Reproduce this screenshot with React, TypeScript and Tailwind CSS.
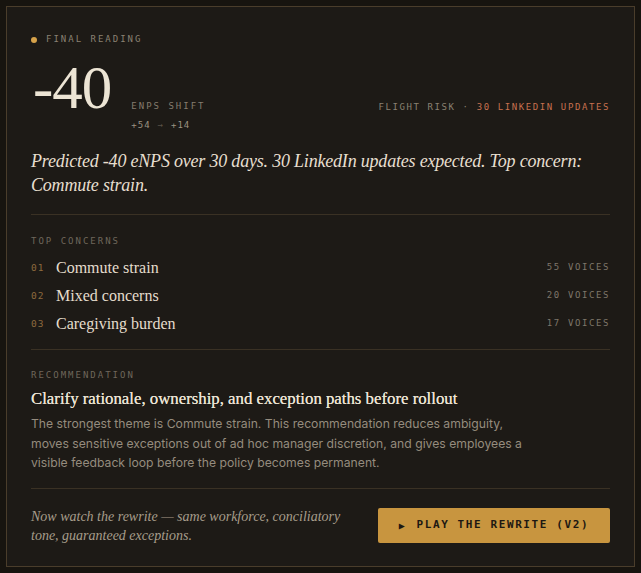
import React from "react";

const concerns = [
  { n: "01", label: "Commute strain", voices: 55 },
  { n: "02", label: "Mixed concerns", voices: 20 },
  { n: "03", label: "Caregiving burden", voices: 17 },
];

const serif = "font-['Liberation_Serif',serif]";
const mono = "font-['DejaVu_Sans_Mono',monospace]";
const sans = "font-['Inter',sans-serif]";

const App = () => {
  return (
    <div className="min-h-[573px] w-full bg-[#17140f] p-[6px]">
      <div className="flex h-[561px] flex-col border border-[#4a3d2b] bg-[#1d1a16] px-[24px] pt-[27px]">
        <div className={`flex h-[12px] items-center gap-[9px] ${mono} text-[9px] tracking-[2px] text-[#8a8172]`}>
          <span className="h-[6px] w-[6px] rounded-full bg-[#d6a24a]" />
          <span>FINAL READING</span>
        </div>

        <div className="mt-[12px] flex items-start">
          <div className={`${serif} h-[60px] text-[61px] leading-[60px] text-[#ece4d4] tracking-[-1px] pl-[2px]`}>-40</div>
          <div className={`ml-[20px] mt-[42px] flex flex-col gap-[7px] ${mono} text-[9px] leading-[12px] tracking-[2px] text-[#857c6e]`}>
            <span>ENPS SHIFT</span>
            <span className="flex items-center gap-[7px] text-[#9c9382] tracking-[1px]">
              +54 <span className="text-[#5a5247]">→</span> +14
            </span>
          </div>
          <div className={`ml-auto mt-[43px] ${mono} text-[9px] leading-[12px] tracking-[1.6px]`}>
            <span className="text-[#8a8172]">FLIGHT RISK · </span>
            <span className="text-[#c7714f]">30 LINKEDIN UPDATES</span>
          </div>
        </div>

        <p className={`mt-[18px] ${serif} italic text-[18px] tracking-[-0.2px] leading-[24px] text-[#e7dfcf]`}>
          Predicted -40 eNPS over 30 days. 30 LinkedIn updates expected. Top concern: Commute strain.
        </p>

        <div className="mt-[17px] h-px bg-[#3a3124]" />

        <div className={`mt-[20px] ${mono} text-[9px] leading-[12px] tracking-[2px] text-[#6f675b]`}>TOP CONCERNS</div>
        <div className="mt-[7px] flex flex-col">
          {concerns.map((c) => (
            <div key={c.n} className="flex h-[28px] items-center">
              <span className={`w-[25px] ${mono} text-[9.5px] tracking-[1px] text-[#8e6a3e]`}>{c.n}</span>
              <span className={`${serif} text-[16px] text-[#e5ddcd]`}>{c.label}</span>
              <span className={`ml-auto ${mono} text-[9px] tracking-[1.6px] text-[#7e766a]`}>
                {c.voices} VOICES
              </span>
            </div>
          ))}
        </div>

        <div className="mt-[11px] h-px bg-[#3a3124]" />

        <div className={`mt-[19px] ${mono} text-[9px] leading-[12px] tracking-[2px] text-[#6f675b]`}>RECOMMENDATION</div>
        <h2 className={`mt-[6px] ${serif} text-[16.8px] font-normal leading-[24px] text-[#ece4d4] [text-shadow:0_0_0.4px_#ece4d4]`}>
          Clarify rationale, ownership, and exception paths before rollout
        </h2>
        <p className={`mt-[3px] w-[502px] ${sans} text-[12.2px] leading-[19.5px] text-[#958c7e]`}>
          The strongest theme is Commute strain. This recommendation reduces ambiguity, moves sensitive exceptions
          out of ad hoc manager discretion, and gives employees a visible feedback loop before the policy becomes
          permanent.
        </p>

        <div className="mt-[15px] h-px bg-[#3a3124]" />

        <div className="mt-[18px] flex items-center">
          <p className={`w-[330px] ${serif} italic text-[14px] leading-[19px] text-[#a79d8b]`}>
            Now watch the rewrite — same workforce, conciliatory tone, guaranteed exceptions.
          </p>
          <button
            className={`ml-auto flex h-[35px] w-[232px] items-center justify-center gap-[10px] rounded-[2px] bg-[#c8953f] ${mono} text-[11px] font-semibold tracking-[1.6px] text-[#1d1812]`}
          >
            <span className="text-[10px]">▶</span>
            <span>PLAY THE REWRITE (V2)</span>
          </button>
        </div>
      </div>
    </div>
  );
};

export default App;
